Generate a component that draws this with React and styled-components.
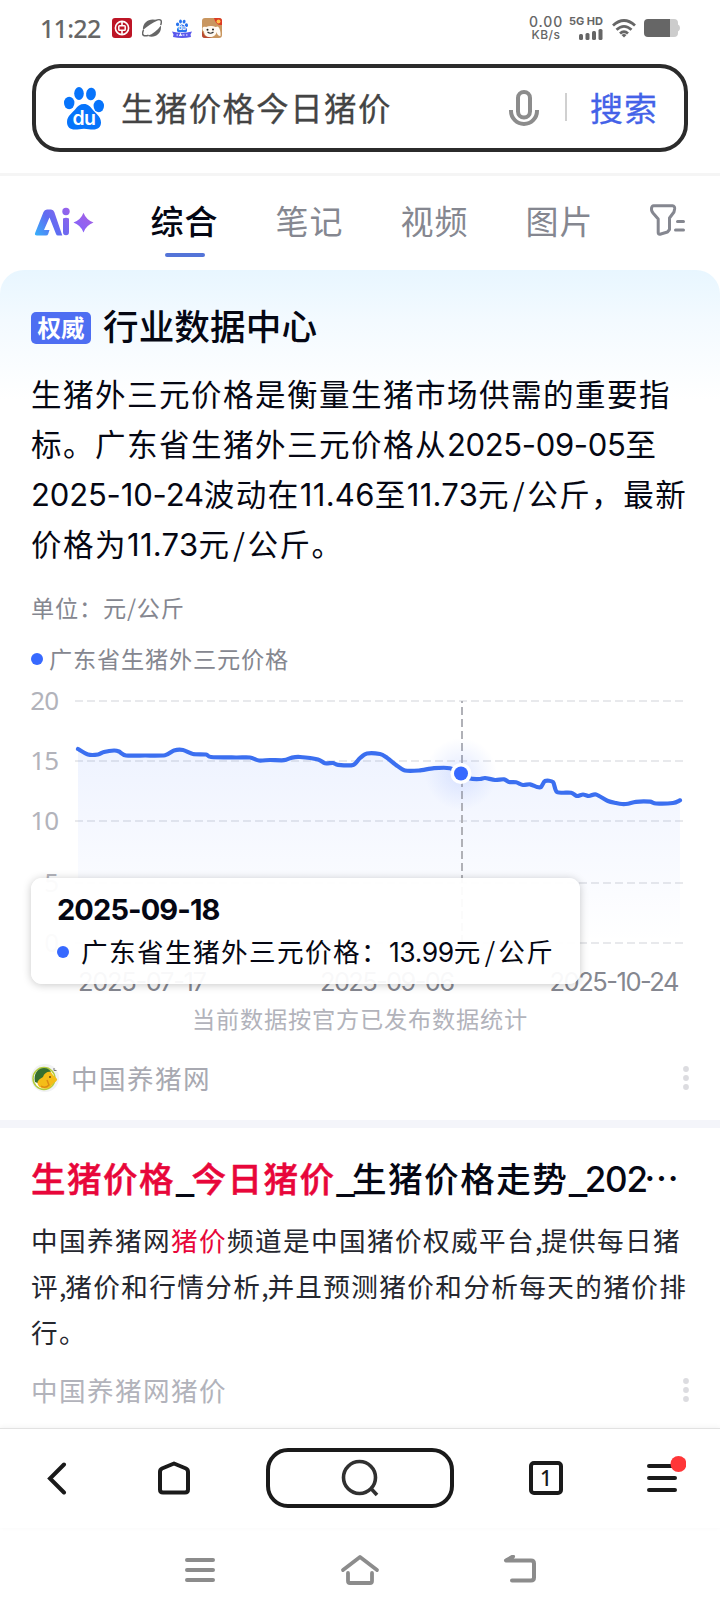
import React from "react";
import styled, { createGlobalStyle } from "styled-components";

const GlobalStyle = createGlobalStyle`
  * {
    box-sizing: border-box;
  }
  body {
    margin: 0;
    background: #fff;
    font-family: "Noto Sans CJK SC", sans-serif;
  }
  svg {
    display: block;
  }
`;

const Page = styled.div`
  width: 720px;
  height: 1612px;
  overflow: hidden;
  background: #fff;
  color: #050713;
  display: flex;
  flex-direction: column;
`;

const Num = styled.span`
  font-family: Inter, sans-serif;
  font-size: ${(props) => props.$size || 31}px;
  line-height: 1;
  letter-spacing: ${(props) => props.$track || 0}px;
`;

const Slash = styled.span`
  padding: 0 ${(props) => props.$pad}px;
  letter-spacing: 0;
`;

/* status bar */

const StatusBar = styled.header`
  flex: none;
  height: 64px;
  padding: 0 40px 8px 41px;
  display: flex;
  align-items: center;
  color: #666;
`;

const Clock = styled.span`
  width: 71px;
  font-family: "Noto Sans", sans-serif;
  font-size: 25px;
  font-weight: 500;
  line-height: 28px;
  letter-spacing: -0.7px;
  margin-left: -1px;
  margin-right: 1px;
`;

const AppIcons = styled.div`
  display: flex;
  gap: 10px;
`;

const StatusRight = styled.div`
  margin-left: auto;
  display: flex;
  align-items: center;
  font-family: Inter, sans-serif;
`;

const Speed = styled.div`
  width: 34px;
  display: flex;
  flex-direction: column;
  align-items: center;
  font-size: 14px;
  line-height: 13px;
  letter-spacing: 0.9px;
  font-weight: 500;
  white-space: nowrap;
  small {
    font-size: 12px;
    letter-spacing: 0.5px;
  }
`;

const Network = styled.div`
  width: 32px;
  margin: 0 9px 0 8px;
  display: flex;
  flex-direction: column;
  align-items: flex-end;
  gap: 3px;
  font-size: 11px;
  line-height: 9px;
  font-weight: 700;
  white-space: nowrap;
`;

/* search */

const SearchBox = styled.div`
  flex: none;
  height: 88px;
  margin: 0 32px;
  padding: 0 26px 0 28px;
  border: 4px solid #2b2b2b;
  border-radius: 28px;
  display: flex;
  align-items: center;
`;

const Query = styled.span`
  margin-left: 16px;
  flex: 1;
  font-size: 32.4px;
  line-height: 40px;
  letter-spacing: 1.45px;
  color: #444;
  -webkit-text-stroke: 0.3px #444;
  padding-bottom: 2px;
`;

const Divider = styled.i`
  width: 2px;
  height: 28px;
  margin: 0 23px 2px 26px;
  background: #d0d0d0;
`;

const SearchButton = styled.span`
  width: 68px;
  padding-bottom: 2px;
  font-size: 33px;
  line-height: 40px;
  letter-spacing: 1px;
  color: #4462e8;
  -webkit-text-stroke: 0.3px #4462e8;
  white-space: nowrap;
`;

/* tabs */

const Tabs = styled.nav`
  flex: none;
  height: 97px;
  margin-top: 21px;
  padding: 0 35px 0 34px;
  border-top: 3px solid #f5f5f5;
  display: flex;
  align-items: flex-start;
`;

const TabItem = styled.div`
  margin-left: 58px;
  width: 67px;
  padding-top: 24px;
  display: flex;
  flex-direction: column;
  align-items: center;
  font-size: 33px;
  line-height: 40px;
  letter-spacing: 1px;
  white-space: nowrap;
  font-weight: ${(props) => (props.$active ? 500 : 400)};
  color: ${(props) => (props.$active ? "#050713" : "#858790")};
  &::after {
    content: "";
    width: 40px;
    height: 4px;
    margin-top: 13px;
    border-radius: 2px;
    background: ${(props) => (props.$active ? "#5474d8" : "transparent")};
  }
`;

const AiLogo = styled.svg`
  margin: 31px -1px 0 0;
`;

const FilterIcon = styled.svg`
  margin: 28px 0 0 auto;
`;

/* data card */

const DataCard = styled.section`
  flex: none;
  height: 850px;
  border-radius: 24px 24px 0 0;
  background: linear-gradient(#e8f6ff, #f3faff 50px, #fff 130px);
  display: flex;
  flex-direction: column;
`;

const CardHead = styled.div`
  height: 98px;
  padding: 33px 31px 0;
  display: flex;
  gap: 12px;
`;

const Badge = styled.span`
  width: 60px;
  height: 32px;
  margin-top: 9px;
  border-radius: 5px;
  background: #4e6ef2;
  color: #fff;
  font-size: 23.5px;
  font-weight: 700;
  line-height: 30px;
  text-align: center;
`;

const CardTitle = styled.h2`
  margin: 0;
  font-size: 35.6px;
  font-weight: 500;
  line-height: 44px;
  letter-spacing: 0.1px;
`;

const Summary = styled.p`
  height: 200px;
  margin: 0 0 0 31px;
  font-size: 30.5px;
  line-height: 50px;
  letter-spacing: 1.5px;
  white-space: nowrap;
`;

const Muted = styled.div`
  height: ${(props) => props.$height}px;
  padding: 0 0 2px 31px;
  display: flex;
  align-items: center;
  gap: 6px;
  font-size: 23.2px;
  line-height: 30px;
  letter-spacing: 0.8px;
  color: #858790;
`;

const Dot = styled.i`
  flex: none;
  width: 12px;
  height: 12px;
  margin-top: ${(props) => props.$drop || 0}px;
  border-radius: 50%;
  background: #3769ff;
`;

const ChartArea = styled.div`
  position: relative;
  height: 320px;
  margin-top: 10px;
`;

const Tooltip = styled.div`
  position: absolute;
  left: 31px;
  top: 198px;
  width: 549px;
  height: 106px;
  padding: 14px 27px 0 26px;
  border-radius: 11px;
  background: rgba(255, 255, 255, 0.94);
  box-shadow: 0 1px 8px rgba(0, 0, 0, 0.22);
`;

const TooltipDate = styled.div`
  font-family: Inter, sans-serif;
  font-size: 29px;
  font-weight: 700;
  line-height: 36px;
  letter-spacing: -0.9px;
`;

const TooltipRow = styled.div`
  display: flex;
  align-items: center;
  gap: 12px;
  height: 45px;
  font-size: 26.6px;
  line-height: 40px;
  letter-spacing: 1.4px;
  white-space: nowrap;
`;

const Footnote = styled.div`
  height: 36px;
  font-size: 23.2px;
  line-height: 36px;
  letter-spacing: 0.8px;
  text-align: center;
  color: #b2b3bb;
`;

const Source = styled.div`
  height: ${(props) => props.$height}px;
  padding: 0 30px 0 31px;
  display: flex;
  align-items: center;
  gap: 12px;
  font-size: 26.6px;
  line-height: 40px;
  letter-spacing: 1.4px;
  color: ${(props) => (props.$height > 60 ? "#a8a9b1" : "#b2b3bb")};
`;

const More = styled.svg`
  margin-left: auto;
`;

/* second result */

const Result = styled.section`
  flex: 1;
  padding-top: 21px;
  border-top: 8px solid #f4f5fa;
`;

const ResultTitle = styled.h2`
  height: 56px;
  margin: 0 0 0 31px;
  font-size: 34.6px;
  font-weight: 500;
  line-height: 56px;
  letter-spacing: 1.45px;
  white-space: nowrap;
`;

const Bar = styled.span`
  font-weight: 700;
  letter-spacing: -3.2px;
`;

const Ellipsis = styled.span`
  margin-left: -3px;
  font-size: 35px;
  letter-spacing: 0;
`;

const ResultText = styled.p`
  height: 138px;
  margin: 12px 0 10px 31px;
  font-size: 26.6px;
  line-height: 46px;
  letter-spacing: 1.4px;
  white-space: nowrap;
  color: #25272f;
`;

const Comma = styled.span`
  letter-spacing: -1.2px;
`;

const Em = styled.em`
  font-style: normal;
  color: #e8063a;
  -webkit-text-stroke: ${(props) => props.$stroke || 0}px #e8063a;
`;

/* bottom bars */

const Toolbar = styled.nav`
  flex: none;
  height: 100px;
  padding-bottom: 1px;
  border-top: 1px solid #e2e2e2;
  box-shadow: 0 -1px 5px rgba(0, 0, 0, 0.05);
  background: #fff;
  display: grid;
  grid-template-columns: 114px 120px 252px 120px 114px;
  align-items: center;
  justify-items: center;
`;

const SearchPill = styled.div`
  width: 188px;
  height: 60px;
  border: 4px solid #1a1a1a;
  border-radius: 22px;
  display: flex;
  align-items: center;
  justify-content: center;
`;

const TabCount = styled.span`
  width: 34px;
  height: 34px;
  border: 4px solid #1a1a1a;
  border-radius: 5px;
  font-family: "Noto Sans", sans-serif;
  font-size: 21px;
  font-weight: 500;
  line-height: 26px;
  text-align: center;
  color: #1a1a1a;
`;

const SystemNav = styled.footer`
  flex: none;
  height: 84px;
  padding: 0 182px 0 183px;
  display: flex;
  align-items: center;
  justify-content: space-between;
`;

const PRICES = [
  [78, 749], [88, 754.5], [98, 754.5], [104, 752], [114, 750.5], [119, 751.5],
  [126, 755.5], [145, 755.5], [165, 755.2], [174, 750.5], [183, 750], [193, 754],
  [206, 754.5], [211, 757], [236, 757.5], [250, 757.5], [259, 760.5], [270, 760],
  [284, 760.2], [292, 757.6], [300, 757], [318, 759.5], [325, 763.3], [333, 763],
  [338, 764.8], [353, 765], [360, 758], [367, 753.5], [380, 754], [386, 757],
  [396, 765], [405, 770.5], [419, 770.5], [434, 768.2], [450, 768.2], [461, 773.5],
  [470, 778.5], [480, 779], [485, 778], [495, 780], [504, 779.3], [509, 782],
  [516, 782.3], [523, 785], [530, 784.3], [537, 787], [541, 787], [545, 781],
  [553, 782], [557, 792], [571, 792.8], [577, 796], [583, 794.5], [589, 796],
  [596, 794.5], [608, 801], [616, 803], [622, 804], [628, 803.7], [636, 801.8],
  [650, 801.7], [656, 803.5], [673, 803], [680, 800.3],
];

const smooth = (pts) =>
  pts.reduce((d, [x, y], i) => {
    if (i === 0) return `M${x} ${y}`;
    const a = pts[i - 2] || pts[i - 1];
    const b = pts[i - 1];
    const c = pts[i + 1] || pts[i];
    const k = 0.13;
    return `${d}C${b[0] + (x - a[0]) * k} ${b[1] + (y - a[1]) * k} ${x - (c[0] - b[0]) * k} ${y - (c[1] - b[1]) * k} ${x} ${y}`;
  }, "");

const GRID = [
  [20, 701],
  [15, 761],
  [10, 821],
  [5, 883],
  [0, 943],
];

const PriceChart = () => {
  const line = smooth(PRICES);
  return (
    <svg width="720" height="320" viewBox="0 680 720 320">
      <defs>
        <linearGradient id="area" x1="0" y1="0" x2="0" y2="1">
          <stop offset="0" stopColor="#2f6bff" stopOpacity="0.08" />
          <stop offset="1" stopColor="#3769ff" stopOpacity="0" />
        </linearGradient>
        <radialGradient id="glow">
          <stop offset="0.2" stopColor="#3769ff" stopOpacity="0.11" />
          <stop offset="1" stopColor="#3769ff" stopOpacity="0" />
        </radialGradient>
      </defs>
      {GRID.map(([value, y]) => (
        <g key={value}>
          <path d={`M75 ${y}H683`} stroke="#e8e9ec" strokeWidth="2" strokeDasharray="8 4" />
          <text x="58.5" y={y + 8.8} textAnchor="end" fontFamily="Noto Sans" fontSize="26" letterSpacing="-0.7" fill="#b2b3bb">
            {value}
          </text>
        </g>
      ))}
      <path d={`${line}V943H78Z`} fill="url(#area)" />
      <path d="M462 701V943" stroke="#b0b1b7" strokeWidth="2" strokeDasharray="8 4" strokeDashoffset="6" />
      <circle cx="461" cy="774" r="36" fill="url(#glow)" />
      <path d={line} fill="none" stroke="#3b6ff0" strokeWidth="4.2" strokeLinecap="round" strokeLinejoin="round" />
      <circle cx="461" cy="773.5" r="10.5" fill="#fff" />
      <circle cx="461" cy="773.5" r="7" fill="#3769ff" />
      <g fontFamily="Inter" fontSize="25.5" fill="#858790">
        <text x="78" y="991" textLength="129">2025-07-17</text>
        <text x="320" y="991" textLength="135">2025-09-06</text>
        <text x="549.5" y="991" textLength="130">2025-10-24</text>
      </g>
    </svg>
  );
};

const PawShape = () => (
  <>
    <ellipse cx="5.2" cy="16" rx="5.2" ry="6.2" />
    <ellipse cx="15" cy="6.5" rx="4.8" ry="6.5" />
    <ellipse cx="27" cy="7" rx="4.9" ry="6.3" transform="rotate(8 27 7)" />
    <ellipse cx="34.8" cy="19" rx="5.2" ry="6.2" />
    <path d="M20 17c4 0 6.500 2.500 8.500 5.500 2.500 3.500 8.500 6.500 8.500 13 0 4.500-3 7-8 7-3 0-5.500-.8-9-.8s-6 .8-9 .8c-5 0-8-2.500-8-7.500 0-6.500 6-9.500 8.500-13C13.500 19 16 17 20 17z" />
  </>
);

const BaiduPaw = () => (
  <svg width="41" height="43" viewBox="0 0 41 43" fill="#0774fb">
    <PawShape />
    <text x="20" y="38" textAnchor="middle" fontFamily="Inter" fontWeight="600" fontSize="19.5" letterSpacing="-0.6" fill="#fff">
      du
    </text>
  </svg>
);

const StatusIcons = () => (
  <AppIcons>
    <svg width="20" height="20" viewBox="0 0 20 20" fill="none" stroke="#fff">
      <rect width="20" height="20" rx="3" fill="#bd1526" stroke="none" />
      <circle cx="10" cy="10" r="6.6" strokeWidth="1.6" />
      <rect x="6.800" y="7.700" width="6.400" height="4.600" rx="0.800" strokeWidth="1.500" />
      <path d="M10 3.500v4M10 12.500v4" strokeWidth="1.600" />
    </svg>
    <svg width="20" height="20" viewBox="0 0 20 20" fill="#666">
      <path d="M1 12C0 5 7.500-1 15.500 2.500 10 5 5.500 8 1 12z" />
      <path d="M18.800 7.500c1.500 7.500-6 13.500-13.300 10.300C11 16 15.500 12.500 18.800 7.500z" />
      <path d="M1.500 12C-.8 17 1.500 18.800 6.500 17.300M13.500 2.500c5-2 7-.6 5.200 4.500" fill="none" stroke="#666" strokeWidth="1.500" />
    </svg>
    <svg width="20" height="20" viewBox="0 0 20 20">
      <g transform="translate(4 1.500) scale(.3)" fill="#2873ee">
        <PawShape />
      </g>
      <text x="10" y="12" textAnchor="middle" fontFamily="Inter" fontWeight="700" fontSize="6" fill="#fff">
        du
      </text>
      <path d="M0 13.500q10 2.500 20 0l-1.500 3 .5 2.500q-9 2-18 0l.5-2.500z" fill="#5a58ec" />
      <path d="M4.500 17h1.500M7.500 18l1-2 1 2M10.500 17h2M14 17h1.500" stroke="#fff" strokeWidth="1.200" fill="none" />
    </svg>
    <svg width="20" height="20" viewBox="0 0 20 20">
      <rect width="20" height="20" rx="3" fill="#c9965f" />
      <path d="M0 13l3 5 7 2H3a3 3 0 0 1-3-3z" fill="#b9472f" />
      <path d="M.5 10C1 8.500 3 8.500 4 9c3-1.500 7-1.500 9.500 0L16 8.500c2 2 3 6 2.500 9.500-2.500 0-3.500-2-4-4-.5 3.500-3 5-6.500 5s-6-2-6-5.500C1 13 .3 11.500.5 10z" fill="#fffaf2" />
      <circle cx="5.500" cy="11.800" r="1" fill="#222" />
      <circle cx="11" cy="11.500" r="1" fill="#222" />
      <path d="M5.500 14q3 2.500 6 0" stroke="#333" strokeWidth="1.200" fill="none" />
      <path d="M12 0h5a3 3 0 0 1 3 3v4q-6 1-8-7z" fill="#dd3a24" />
      <circle cx="16.500" cy="3.500" r="2" fill="#ffc04a" />
    </svg>
  </AppIcons>
);

const MoreDots = () => (
  <More width="8" height="26" viewBox="0 0 8 26" fill="#dcdce0">
    <circle cx="4" cy="4" r="2.900" />
    <circle cx="4" cy="13" r="2.900" />
    <circle cx="4" cy="22" r="2.900" />
  </More>
);

export default function App() {
  return (
    <Page>
      <GlobalStyle />
      <StatusBar>
        <Clock>11:22</Clock>
        <StatusIcons />
        <StatusRight>
          <Speed>
            0.00
            <small>KB/s</small>
          </Speed>
          <Network>
            5G HD
            <svg width="24" height="11" viewBox="0 0 24 11" fill="#666">
              <rect x="0" y="5" width="4" height="6" rx="1.500" />
              <rect x="6.500" y="4" width="4" height="7" rx="1.500" />
              <rect x="13" y="2" width="4" height="9" rx="1.500" />
              <rect x="19.500" y="0" width="4" height="11" rx="1.500" />
            </svg>
          </Network>
          <svg width="24" height="20" viewBox="0 0 24 20" fill="none" stroke="#666" strokeWidth="2.800">
            <path d="M1 7.500q11-10 22 0M4.500 11.800q7.500-6.800 15 0M8 15.500q4-3.600 8 0" />
            <path d="M9.500 17q2.500-2 5 0L12 19.500z" fill="#666" stroke="none" />
          </svg>
          <svg width="44" height="18" viewBox="-8 0 44 18">
            <path d="M25 0h5q4 0 4 4v1.500q2 .5 2 3.500t-2 3.500V14q0 4-4 4h-5z" fill="#ccc" />
            <path d="M4 0h22v18H4q-4 0-4-4V4q0-4 4-4z" fill="#666" />
          </svg>
        </StatusRight>
      </StatusBar>

      <SearchBox>
        <BaiduPaw />
        <Query>生猪价格今日猪价</Query>
        <svg width="30" height="37" viewBox="0 0 30 37" fill="none" stroke="#8c8c8c" strokeWidth="4">
          <rect x="9" y="2" width="12" height="25.500" rx="6" />
          <path d="M2 20v1a13 13 0 0 0 26 0v-1" />
        </svg>
        <Divider />
        <SearchButton>搜索</SearchButton>
      </SearchBox>

      <Tabs>
        <AiLogo width="60" height="30" viewBox="0 0 60 30">
          <defs>
            <linearGradient id="ai" gradientUnits="userSpaceOnUse" x1="0" y1="28" x2="34" y2="4">
              <stop offset="0" stopColor="#35b4fb" />
              <stop offset="0.5" stopColor="#5f6cf2" />
              <stop offset="1" stopColor="#9562ec" />
            </linearGradient>
            <linearGradient id="star" x1="1" y1="0" x2="0" y2="1">
              <stop offset="0" stopColor="#a95fe0" />
              <stop offset="1" stopColor="#7e64ff" />
            </linearGradient>
          </defs>
          <path
            d="M3 28.500Q0 28.500 1.300 25.500L9.500 5Q10.500 2.500 13 2.500H17Q19.500 2.500 20.300 5L28.300 28.500H24Q22.500 28.500 22 27L15.500 10.500 10 23H15.500L14.200 27Q13.700 28.500 12 28.500Z"
            fill="url(#ai)"
          />
          <path d="M29 11.500q3-1.500 6 0v13.500q0 3.200-3 3.200t-3-3.200z" fill="url(#ai)" />
          <circle cx="32" cy="4.500" r="3.700" fill="url(#ai)" />
          <path d="M49.500 5.800q2.600 7 10 9.800-7.400 2.800-10 9.800-2.600-7-10-9.800 7.400-2.800 10-9.800z" fill="url(#star)" />
        </AiLogo>
        <TabItem $active>综合</TabItem>
        <TabItem>笔记</TabItem>
        <TabItem>视频</TabItem>
        <TabItem>图片</TabItem>
        <FilterIcon width="35" height="32" viewBox="0 0 35 32" fill="none" stroke="#858790" strokeWidth="3" strokeLinecap="round" strokeLinejoin="round">
          <path d="M3.500 1.800H22.500Q25 2 24.600 5L24 8 19.500 14V25.500L17.500 28 10 30.200Q8.200 30.500 8.200 28.500V15L3 9Q1 6.500 1.600 4.200 2 1.800 3.500 1.800Z" />
          <path d="M27.500 17.500h6M25.500 26h8" />
        </FilterIcon>
      </Tabs>

      <DataCard>
        <CardHead>
          <Badge>权威</Badge>
          <CardTitle>行业数据中心</CardTitle>
        </CardHead>
        <Summary>
          生猪外三元价格是衡量生猪市场供需的重要指
          <br />
          标。广东省生猪外三元价格从<Num $track={-0.35}>2025-09-05</Num>至
          <br />
          <Num $track={-0.15}>2025-10-24</Num>波动在<Num $track={0.3}>11.46</Num>至<Num $track={0.3}>11.73</Num>元<Slash $pad={2.6}>/</Slash>公斤，最新
          <br />
          价格为<Num $track={0.3}>11.73</Num>元<Slash $pad={2.6}>/</Slash>公斤。
        </Summary>
        <Muted $height={79}>单位：元/公斤</Muted>
        <Muted $height={23}>
          <Dot $drop={2} />
          广东省生猪外三元价格
        </Muted>
        <ChartArea>
          <PriceChart />
          <Tooltip>
            <TooltipDate>2025-09-18</TooltipDate>
            <TooltipRow>
              <Dot $drop={2} />
              <span>
                广东省生猪外三元价格：<Num $size={26.5} $track={-0.4}>13.99</Num>元<Slash $pad={3}>/</Slash>公斤
              </span>
            </TooltipRow>
          </Tooltip>
        </ChartArea>
        <Footnote>当前数据按官方已发布数据统计</Footnote>
        <Source $height={84}>
          <svg width="28" height="28" viewBox="0 0 28 28">
            <circle cx="14" cy="14" r="14" fill="#f1f2f4" />
            <circle cx="13" cy="14.500" r="11" fill="#fff" stroke="#b4cc3c" strokeWidth="1.500" />
            <path d="M4 18C2 10 7 4 13 4c4 0 6 2 7 4l-6 4-5 8z" fill="#36702e" />
            <path d="M7 21c-2-4 2-6 5-8 1-4 5-6 8-5 1 3 5 5 6 7s-3 3-5 6c-3 5-11 5-14 0z" fill="#f4bd18" />
            <path d="M10 22q4 3 8-1l-2-5" stroke="#dc8b12" strokeWidth="1.500" fill="none" />
            <circle cx="19" cy="13" r="1" fill="#6b4b10" />
            <path d="M23 4v2.500h2.500" stroke="#777" strokeWidth="1" fill="none" />
          </svg>
          中国养猪网
          <MoreDots />
        </Source>
      </DataCard>

      <Result>
        <ResultTitle>
          <Em $stroke={0.5}>生猪价格</Em><Bar>_</Bar><Em $stroke={0.5}>今日猪价</Em><Bar>_</Bar>生猪价格走势<Bar>_</Bar><Num $size={35} $track={-1.1}>202</Num>
          <Ellipsis>⋯</Ellipsis>
        </ResultTitle>
        <ResultText>
          中国养猪网<Em>猪价</Em>频道是中国猪价权威平台<Comma>,</Comma>提供每日猪
          <br />
          评<Comma>,</Comma>猪价和行情分析<Comma>,</Comma>并且预测猪价和分析每天的猪价排
          <br />
          行。
        </ResultText>
        <Source $height={50}>
          中国养猪网猪价
          <MoreDots />
        </Source>
      </Result>

      <Toolbar>
        <svg width="26" height="34" viewBox="0 0 26 34" fill="none" stroke="#1a1a1a" strokeWidth="4" strokeLinecap="round">
          <path d="M20 3.500L6 17.500 20 31.500" />
        </svg>
        <svg width="34" height="34" viewBox="0 0 34 34" fill="none" stroke="#1a1a1a" strokeWidth="4" strokeLinejoin="round">
          <path d="M17 2.500L29 7.500Q31 8.500 31 11V28.500Q31 31.500 28 31.500H6Q3 31.500 3 28.500V11Q3 8.500 5 7.500Z" />
        </svg>
        <SearchPill>
          <svg width="38" height="38" viewBox="0 0 38 38" fill="none" stroke="#303030" strokeWidth="3.600">
            <circle cx="18.500" cy="18.500" r="16" />
            <path d="M29.500 29l6.500 7" />
          </svg>
        </SearchPill>
        <TabCount>1</TabCount>
        <svg width="46" height="44" viewBox="0 0 46 44" stroke="#1a1a1a" strokeWidth="4" strokeLinecap="round">
          <path d="M9 10h26M9 22h26M9 34h26" />
          <circle cx="38.500" cy="8" r="8" fill="#ff3638" stroke="none" />
        </svg>
      </Toolbar>
      <SystemNav>
        <svg width="34" height="30" viewBox="0 0 34 30" stroke="#8c8c8c" strokeWidth="4" strokeLinecap="round">
          <path d="M4 5h26M4 15h26M4 25h26" />
        </svg>
        <svg width="40" height="32" viewBox="0 0 40 32" fill="none" stroke="#8c8c8c" strokeWidth="3.800" strokeLinecap="round" strokeLinejoin="round">
          <path d="M3 16L20 3l17 13M8 19v8q0 2 2 2h20q2 0 2-2v-8" />
        </svg>
        <svg width="36" height="30" viewBox="0 0 36 30" fill="none" stroke="#8c8c8c" strokeWidth="4" strokeLinecap="round" strokeLinejoin="round">
          <path d="M11 1.500L4 5.500H29Q32 5.500 32 8.500V22.500Q32 25.500 29 25.500H10" />
        </svg>
      </SystemNav>
    </Page>
  );
}
